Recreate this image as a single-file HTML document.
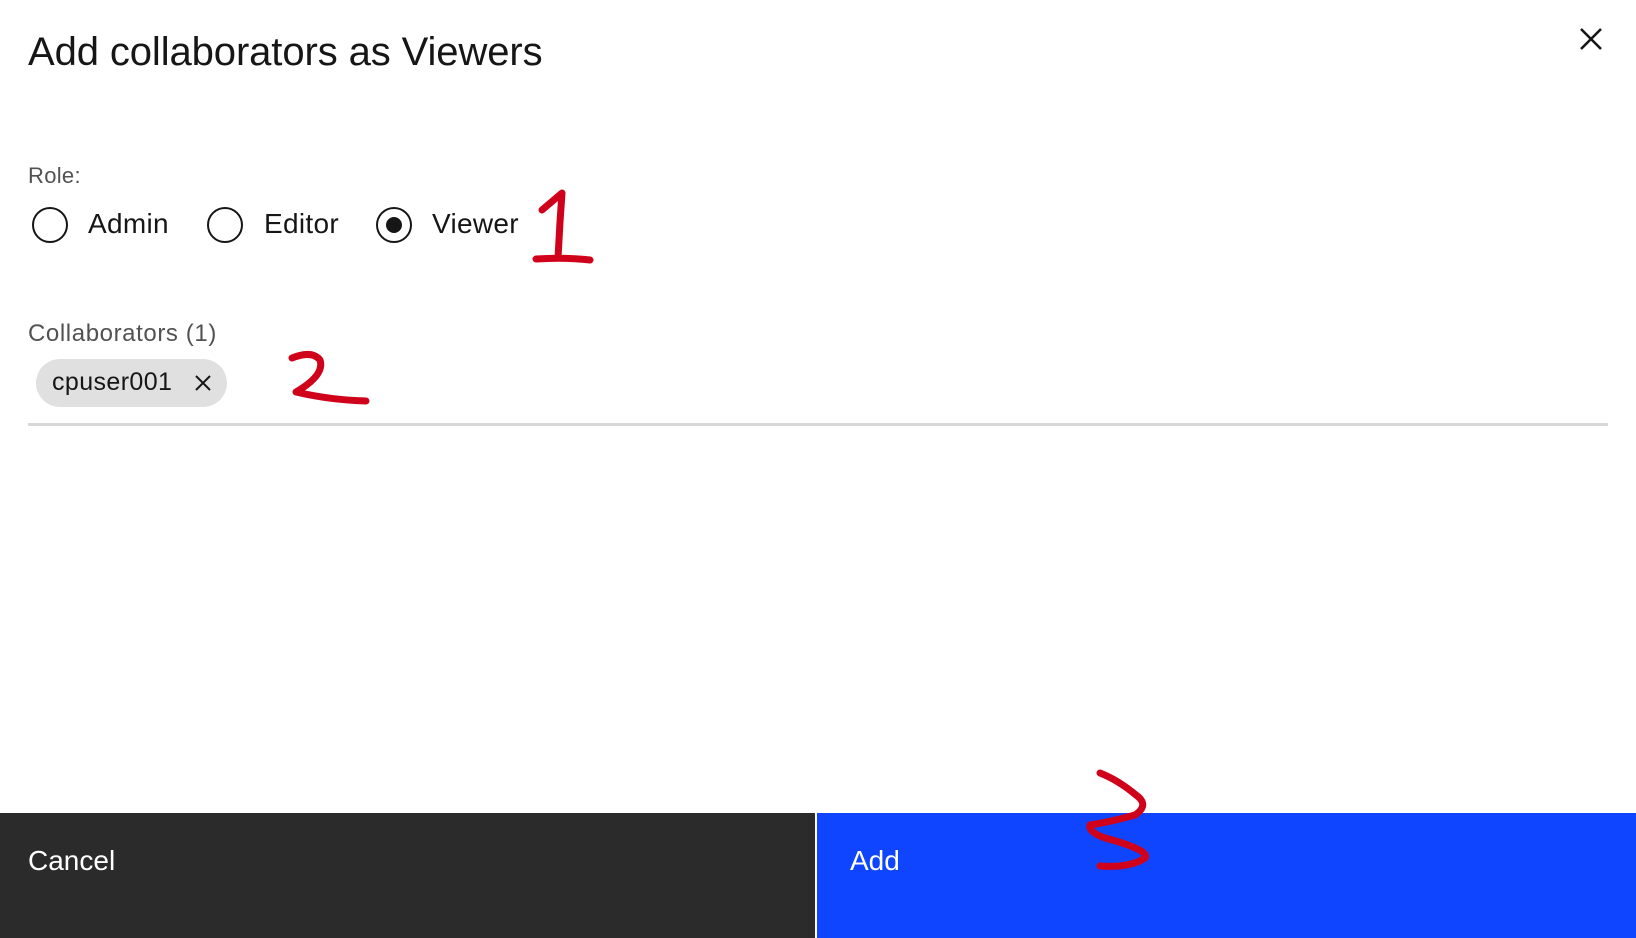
<!DOCTYPE html>
<html><head><meta charset="utf-8"><style>
html,body{margin:0;padding:0;width:1636px;height:938px;overflow:hidden;background:#fff;font-family:"Liberation Sans",sans-serif;color:#161616}
.a{position:absolute;white-space:nowrap}
</style></head><body>
<div class="a" style="left:28px;top:27px;font-size:40px;line-height:50px;letter-spacing:-0.1px">Add collaborators as Viewers</div>
<svg class="a" style="left:1578px;top:26px" width="26" height="26" viewBox="0 0 26 26"><path d="M3 3L23 23M23 3L3 23" stroke="#161616" stroke-width="2.6"/></svg>
<div class="a" style="left:28px;top:163px;font-size:22px;color:#525252;letter-spacing:0.3px">Role:</div>
<svg class="a" style="left:0;top:200px" width="560" height="50">
<circle cx="50" cy="25" r="17" fill="none" stroke="#161616" stroke-width="2"/>
<circle cx="225" cy="25" r="17" fill="none" stroke="#161616" stroke-width="2"/>
<circle cx="394" cy="25" r="17" fill="none" stroke="#161616" stroke-width="2"/>
<circle cx="394" cy="25" r="8" fill="#161616"/>
</svg>
<div class="a" style="left:88px;top:208px;font-size:28px;letter-spacing:0.3px">Admin</div>
<div class="a" style="left:264px;top:208px;font-size:28px;letter-spacing:0.3px">Editor</div>
<div class="a" style="left:432px;top:208px;font-size:28px;letter-spacing:0.3px">Viewer</div>
<div class="a" style="left:28px;top:320px;font-size:24px;color:#525252;letter-spacing:0.6px">Collaborators (1)</div>
<div class="a" style="left:36px;top:359px;width:191px;height:48px;border-radius:24px;background:#e0e0e0"></div>
<div class="a" style="left:52px;top:368px;font-size:25px;letter-spacing:0.4px">cpuser001</div>
<svg class="a" style="left:194px;top:374px" width="18" height="18"><path d="M2 2L16 16M16 2L2 16" stroke="#161616" stroke-width="2"/></svg>
<div class="a" style="left:28px;top:423px;width:1580px;height:3px;background:#d8d8d8"></div>
<div class="a" style="left:0;top:813px;width:815px;height:125px;background:#2b2b2b"></div>
<div class="a" style="left:817px;top:813px;width:819px;height:125px;background:#0f45ff"></div>
<div class="a" style="left:28px;top:845px;font-size:28px;color:#fff">Cancel</div>
<div class="a" style="left:850px;top:845px;font-size:28px;color:#fff">Add</div>
<svg class="a" style="left:0;top:0" width="1636" height="938" fill="none" stroke="#d0021b" stroke-width="7" stroke-linecap="round" stroke-linejoin="round">
<path d="M542 210L562 193L560 222L558 258M536 259Q565 257 590 260"/>
<path d="M292 358Q312 350 320 360Q325 375 296 392Q330 400 366 401"/>
<path d="M1100 773Q1118 780 1136 795Q1150 805 1135 815Q1110 822 1090 825Q1088 832 1105 838Q1150 850 1145 858Q1130 868 1100 866"/>
</svg>
</body></html>
